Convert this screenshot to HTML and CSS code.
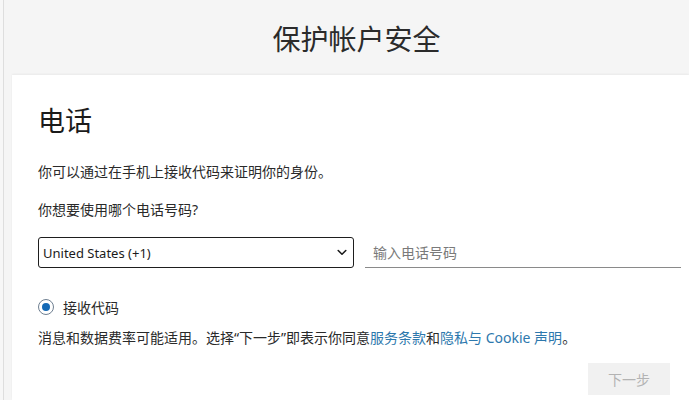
FILE: index.html
```html
<!DOCTYPE html>
<html lang="zh-CN">
<head>
<meta charset="utf-8">
<title>保护帐户安全</title>
<link rel="stylesheet" href="styles.css">
</head>
<body>
<div class="page">
  <div class="frame">
    <header class="top">
      <h1 class="title">保护帐户安全</h1>
    </header>
    <main class="card">
      <h2 class="heading">电话</h2>
      <p class="text first">你可以通过在手机上接收代码来证明你的身份。</p>
      <p class="text second">你想要使用哪个电话号码?</p>
      <div class="fields">
        <div class="select">
          <span class="select-value">United States (+1)</span>
          <svg class="chevron" width="10" height="7" viewBox="0 0 10 7" aria-hidden="true"><path d="M1.2 1.5 L5 5.2 L8.8 1.5" fill="none" stroke="#1b1b1b" stroke-width="1.6" stroke-linecap="round" stroke-linejoin="round"/></svg>
        </div>
        <div class="phone">
          <span class="placeholder">输入电话号码</span>
        </div>
      </div>
      <label class="radio-row">
        <span class="radio"><span class="dot"></span></span>
        <span class="radio-label">接收代码</span>
      </label>
      <p class="text notice">消息和数据费率可能适用。选择“下一步”即表示你同意<a class="link" href="#">服务条款</a>和<a class="link" href="#">隐私与 Cookie 声明</a>。</p>
      <div class="actions">
        <button class="next" type="button">下一步</button>
      </div>
    </main>
  </div>
</div>
</body>
</html>
```

FILE: styles.css
```css
* { box-sizing: border-box; }

html, body {
  margin: 0;
  padding: 0;
  height: 100%;
}

body {
  background: #f7f7f7;
  font-family: "Noto Sans", "Noto Sans CJK SC", sans-serif;
  color: #222;
  overflow: hidden;
}

.page {
  height: 100%;
  padding-left: 3px;
}

.frame {
  height: 100%;
  border-left: 1px solid #dedede;
  padding-left: 8px;
  background: #f5f5f5;
  display: flex;
  flex-direction: column;
}

.top {
  height: 75px;
  display: flex;
  align-items: center;
  justify-content: center;
  padding-left: 12px;
}

.title {
  margin: 0;
  font-family: "Noto Sans CJK SC", sans-serif;
  font-weight: 400;
  font-size: 28px;
  line-height: 36px;
  color: #2b2b2b;
  letter-spacing: 0;
}

.card {
  flex: 1;
  background: #fff;
  box-shadow: 0 -1px 2px rgba(0, 0, 0, 0.05);
  padding: 27px 8px 0 26px;
}

.heading {
  margin: 0;
  font-family: "Noto Sans CJK SC", sans-serif;
  font-weight: 400;
  font-size: 27px;
  line-height: 36px;
  color: #1b1b1b;
}

.text {
  margin: 0;
  font-size: 14px;
  line-height: 20px;
  color: #2a2a2a;
}

.first { margin-top: 24px; }
.second { margin-top: 18px; }

.fields {
  margin-top: 17px;
  display: grid;
  grid-template-columns: 1fr 1fr;
  gap: 11px;
}

.select {
  height: 31px;
  border: 1px solid #1e1e1e;
  border-radius: 3px;
  display: flex;
  align-items: center;
  justify-content: space-between;
  padding: 0 6px 0 4px;
}

.select-value {
  font-size: 13px;
  color: #1b1b1b;
}

.chevron { display: block; }

.phone {
  height: 31px;
  border-bottom: 1px solid #8a8a8a;
  display: flex;
  align-items: center;
  padding-left: 8px;
}

.placeholder {
  font-size: 14px;
  color: #7a7a7a;
}

.radio-row {
  margin-top: 29px;
  height: 20px;
  display: flex;
  align-items: center;
  gap: 9px;
}

.radio {
  width: 16px;
  height: 16px;
  border: 1.5px solid #6f7f91;
  border-radius: 50%;
  display: flex;
  align-items: center;
  justify-content: center;
}

.dot {
  width: 8px;
  height: 8px;
  border-radius: 50%;
  background: #1469b5;
}

.radio-label {
  font-size: 14px;
  color: #2a2a2a;
}

.notice { margin-top: 11px; }

.link {
  color: #2d78ad;
  text-decoration: none;
}

.actions {
  margin-top: 15px;
  display: flex;
  justify-content: flex-end;
  padding-right: 11px;
}

.next {
  width: 82px;
  height: 32px;
  border: none;
  background: #f1f1f1;
  color: #b3b3b3;
  font-family: "Noto Sans CJK SC", sans-serif;
  font-size: 14px;
  padding: 0;
}
```
